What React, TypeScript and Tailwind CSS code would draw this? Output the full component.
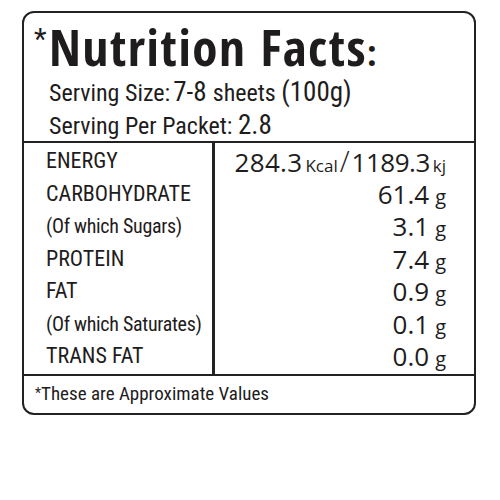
import React from 'react';

interface Row {
    label: string;
    value: string;
    unit: string;
    sub?: boolean;
}

const rows: Row[] = [
    { label: 'CARBOHYDRATE', value: '61.4', unit: 'g' },
    { label: '(Of which Sugars)', value: '3.1', unit: 'g', sub: true },
    { label: 'PROTEIN', value: '7.4', unit: 'g' },
    { label: 'FAT', value: '0.9', unit: 'g' },
    { label: '(Of which Saturates)', value: '0.1', unit: 'g', sub: true },
    { label: 'TRANS FAT', value: '0.0', unit: 'g' },
];

const body = "font-['Roboto_Condensed','Liberation_Sans',sans-serif]";
const nums = "font-['Open_Sans','Liberation_Sans',sans-serif]";

const App: React.FC = () => {
    return (
        <div className={`w-[500px] h-[500px] bg-white pt-[11px] pl-[22px] text-[#1e1c1c] ${body}`}>
            <div className="w-[454px] h-[404px] border-2 border-[#222] rounded-[12px] flex flex-col">
                {/* header */}
                <div className="h-[128px] pl-[10px] pt-[2px]">
                    <div className="flex items-start h-[70px] leading-[70px] -mt-[4px]">
                        <span className="text-[29px] leading-[30px] mt-[13px] w-[15px]">*</span>
                        <span className="font-['Open_Sans_Condensed','Roboto_Condensed',sans-serif] font-bold text-[51px] tracking-[1.5px]">
                            Nutrition Facts
                            <span className="text-[36px] tracking-normal">:</span>
                        </span>
                    </div>
                    <div className="-mt-[5px] pl-[15px] text-[24px] leading-[32px] whitespace-nowrap">
                        Serving Size:<span className="text-[27px] ml-[3px]">7-8 </span>sheets <span className="text-[27px]">(100g)</span>
                    </div>
                    <div className="pl-[15px] text-[24px] leading-[32px] whitespace-nowrap">
                        Serving Per Packet: <span className="text-[27px]">2.8</span>
                    </div>
                </div>

                {/* table */}
                <div className="flex h-[233px] border-t-2 border-[#222]">
                    <div className="w-[191px] border-r-[3px] border-[#222] pt-[2px] pl-[22px] text-[22px]">
                        <div className="h-[32.5px] leading-[32.5px]">ENERGY</div>
                        {rows.map((r) => (
                            <div
                                key={r.label}
                                className={
                                    r.sub
                                        ? 'h-[32.5px] leading-[32.5px] whitespace-nowrap text-[20px] tracking-[-0.3px]'
                                        : 'h-[32.5px] leading-[32.5px] whitespace-nowrap'
                                }
                            >
                                {r.label}
                            </div>
                        ))}
                    </div>
                    <div className={`flex-1 pt-[2px] pr-[28px] ${nums}`}>
                        <div className="h-[32.5px] leading-[32.5px] flex justify-end items-baseline whitespace-nowrap">
                            <span className="text-[26px] tracking-[0.3px]">284.3</span>
                            <span className="text-[17px] ml-[3px]">Kcal</span>
                            <span className="text-[29px] font-light ml-[2px] mr-[2px]">/</span>
                            <span className="text-[26px] tracking-[-0.5px]">1189.3</span>
                            <span className="text-[17px] ml-[3px]">kj</span>
                        </div>
                        {rows.map((r) => (
                            <div key={r.label} className="h-[32.5px] leading-[32.5px] flex justify-end items-baseline">
                                <span className="text-[26px]">{r.value}</span>
                                <span className="text-[20px] ml-[6px]">{r.unit}</span>
                            </div>
                        ))}
                    </div>
                </div>

                {/* footer */}
                <div className="border-t-2 border-[#222] flex-1 pl-[11px] pt-[5px] text-[19px] leading-[26px]">
                    <span className="text-[14px] align-top relative top-[-1px]">*</span>These are Approximate Values
                </div>
            </div>
        </div>
    );
};

export default App;
